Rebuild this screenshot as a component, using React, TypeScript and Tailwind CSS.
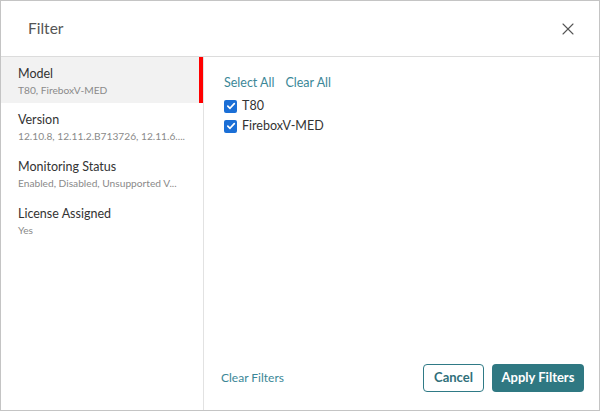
import { X } from 'lucide-react';

interface FilterGroup {
  label: string;
  summary: string;
}

const groups: FilterGroup[] = [
  { label: 'Model', summary: 'T80, FireboxV-MED' },
  { label: 'Version', summary: '12.10.8, 12.11.2.B713726, 12.11.6....' },
  { label: 'Monitoring Status', summary: 'Enabled, Disabled, Unsupported V...' },
  { label: 'License Assigned', summary: 'Yes' },
];

const options = ['T80', 'FireboxV-MED'];

function CheckBox() {
  return (
    <span className="w-[13px] h-[13px] rounded-[2px] bg-[#1b6fd6] flex items-center justify-center shrink-0">
      <svg width="10" height="10" viewBox="0 0 10 10" fill="none">
        <path d="M1.8 5.2 L4 7.3 L8.3 2.6" stroke="white" strokeWidth="1.7" strokeLinecap="round" strokeLinejoin="round" />
      </svg>
    </span>
  );
}

export default function App() {
  return (
    <div className="w-[600px] h-[411px] bg-white border border-[#c4c4c4] flex flex-col font-['Lato',sans-serif] overflow-hidden">
      <div className="h-[56px] shrink-0 flex items-center justify-between pl-[27px] pr-[21px] border-b border-[#dcdcdc]">
        <h2 className="text-[15.5px] text-[#555] leading-none pt-[1px]">Filter</h2>
        <X size={20} strokeWidth={1.3} className="text-[#555]" />
      </div>
      <div className="flex flex-1 min-h-0">
        <div className="w-[203px] shrink-0 border-r border-[#e2e2e2]">
          {groups.map((g, i) => (
            <div
              key={g.label}
              className={
                i === 0
                  ? 'h-[46px] pl-[17px] pt-[8px] bg-[#f2f2f2] border-r-[4px] border-[#ff0000]'
                  : 'h-[47px] pl-[17px] pt-[8px]'
              }
            >
              <div className="text-[12.5px] leading-[18px] text-[#333]">{g.label}</div>
              <div className="text-[10.2px] leading-[15px] text-[#8a8a8a] whitespace-nowrap">{g.summary}</div>
            </div>
          ))}
        </div>
        <div className="flex-1 flex flex-col pl-[20px] pr-[15px] pt-[17px] pb-[18px]">
          <div className="flex gap-[11px] text-[12.5px] leading-[18px] text-[#3b8797]">
            <span>Select All</span>
            <span>Clear All</span>
          </div>
          <div className="mt-[4px] flex flex-col">
            {options.map(o => (
              <label key={o} className="flex items-center gap-[5px] h-[20px] text-[12.5px] text-[#333]">
                <CheckBox />
                <span>{o}</span>
              </label>
            ))}
          </div>
          <div className="mt-auto flex items-center justify-between">
            <span className="text-[12px] text-[#3b8797] -ml-[3px]">Clear Filters</span>
            <div className="flex gap-[8px]">
              <button className="h-[28px] w-[61px] rounded-[4px] border border-[#2f7a86] text-[13px] font-bold text-[#2f6f7a] bg-white">
                Cancel
              </button>
              <button className="h-[28px] w-[92px] rounded-[4px] bg-[#2f7882] text-[13px] font-bold text-white">
                Apply Filters
              </button>
            </div>
          </div>
        </div>
      </div>
    </div>
  );
}
